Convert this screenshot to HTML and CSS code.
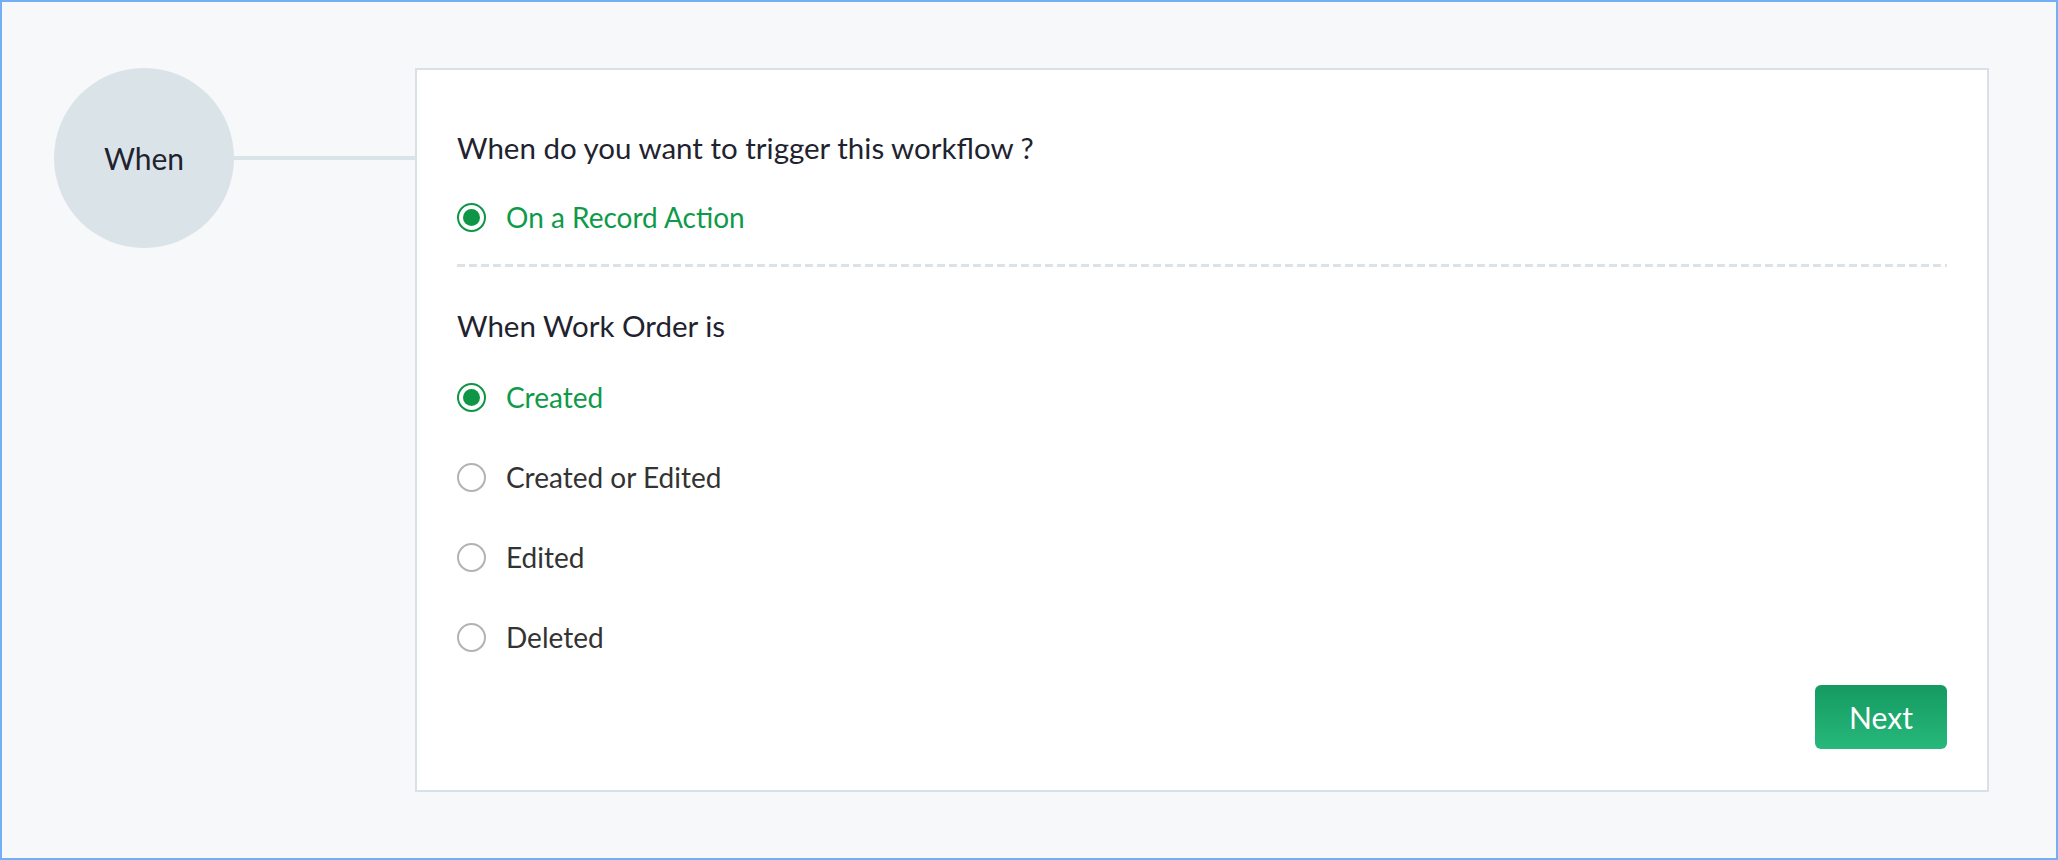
FILE: index.html
```html
<!DOCTYPE html>
<html lang="en">
<head>
    <meta charset="UTF-8">
    <meta name="viewport" content="width=device-width, initial-scale=1.0">
    <title>Workflow Trigger</title>
    <link rel="stylesheet" href="styles.css">
</head>
<body>
    <div class="frame">
        <div class="step">
            <div class="step-node">When</div>
            <div class="step-link"></div>
            <div class="card">
                <div class="question">When do you want to trigger this workflow ?</div>
                <div class="option selected trigger-option">
                    <span class="radio"></span>
                    <span class="option-label">On a Record Action</span>
                </div>
                <div class="divider"></div>
                <div class="question sub-question">When Work Order is</div>
                <div class="options">
                    <div class="option selected">
                        <span class="radio"></span>
                        <span class="option-label">Created</span>
                    </div>
                    <div class="option">
                        <span class="radio"></span>
                        <span class="option-label">Created or Edited</span>
                    </div>
                    <div class="option">
                        <span class="radio"></span>
                        <span class="option-label">Edited</span>
                    </div>
                    <div class="option">
                        <span class="radio"></span>
                        <span class="option-label">Deleted</span>
                    </div>
                </div>
                <div class="actions">
                    <button type="button" class="btn-next">Next</button>
                </div>
            </div>
        </div>
    </div>
</body>
</html>
```

FILE: styles.css
```css
html, body {
    margin: 0;
    height: 100%;
}
body {
    font-family: Lato, "Open Sans", Arial, sans-serif;
    background-color: #f6f8fa;
    color: #1f2330;
}
.frame {
    box-sizing: border-box;
    height: 100%;
    border: 2px solid #74aef6;
    padding: 66px 67px 0 52px;
}
.step {
    display: flex;
    align-items: flex-start;
}
.step-node {
    flex: 0 0 180px;
    height: 180px;
    border-radius: 50%;
    background-color: #dae3e8;
    display: flex;
    justify-content: center;
    align-items: center;
    font-size: 30px;
    color: #1f2330;
}
.step-link {
    flex: 0 0 181px;
    height: 4px;
    margin-top: 88px;
    background-color: #dae3e8;
}
.card {
    flex: 1;
    background-color: #fff;
    border: 2px solid #d8e1e8;
    padding: 60px 40px 41px 40px;
}
.question {
    font-size: 29.5px;
    line-height: 1.2;
    color: #1f2330;
}
.option {
    display: flex;
    align-items: center;
    gap: 20px;
    height: 34px;
    font-size: 28px;
    line-height: 1.2;
    color: #333;
}
.trigger-option {
    margin-top: 35px;
}
.radio {
    box-sizing: border-box;
    flex: 0 0 29px;
    height: 29px;
    border: 2px solid #b3b3b3;
    border-radius: 50%;
    display: flex;
    justify-content: center;
    align-items: center;
}
.option.selected {
    color: #0f9a49;
}
.option.selected .radio {
    border-color: #0e9646;
}
.option.selected .radio::after {
    content: "";
    width: 17px;
    height: 17px;
    border-radius: 50%;
    background-color: #0e9646;
}
.divider {
    height: 3px;
    margin-top: 30px;
    background-image: repeating-linear-gradient(90deg, #dbe2e8 0, #dbe2e8 8px, transparent 8px, transparent 12px);
}
.sub-question {
    margin-top: 41px;
}
.options {
    display: flex;
    flex-direction: column;
    gap: 46px;
    margin-top: 37px;
}
.actions {
    display: flex;
    justify-content: flex-end;
    margin-top: 30px;
}
.btn-next {
    width: 132px;
    height: 64px;
    border: none;
    border-radius: 6px;
    background: linear-gradient(180deg, #159a61, #27b87b);
    color: #fff;
    font-family: inherit;
    font-size: 30px;
    cursor: pointer;
}
```
